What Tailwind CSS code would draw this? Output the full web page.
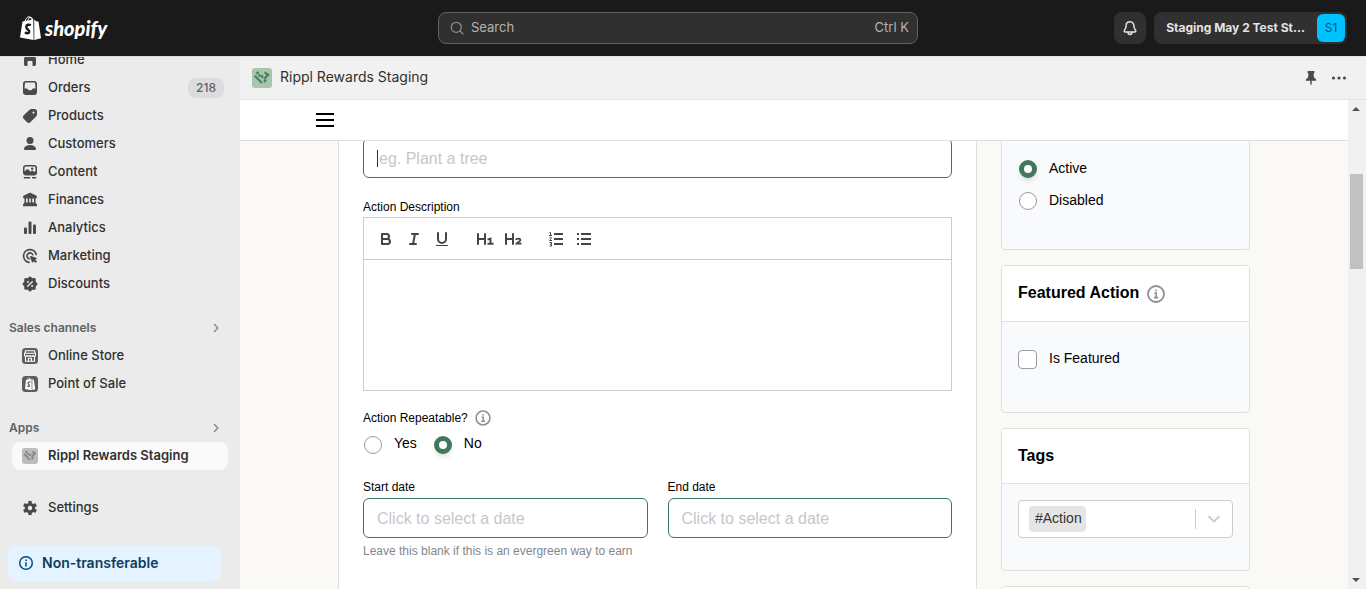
<!DOCTYPE html>
<html lang="en">
<head>
<meta charset="utf-8">
<meta name="viewport" content="width=device-width, initial-scale=1">
<title>Rippl Rewards Staging</title>
<script src="https://cdn.jsdelivr.net/npm/@tailwindcss/browser@4"></script>
</head>
<body class="flex h-screen flex-col overflow-hidden bg-[#1a1a1a] font-['Inter',sans-serif] text-[13px] text-[#303030]">

<header class="grid h-14 shrink-0 grid-cols-[418px_minmax(0,480px)_minmax(0,1fr)] items-center bg-[#1a1a1a] pr-[19px] pl-5">
  <a href="#" aria-label="Shopify home" class="flex items-center gap-1 text-white">
    <svg class="h-6 w-[21px]" viewBox="0 0 21 24" fill="none">
      <path d="M2.500 5.600 13.300 3.400 13.600 24 0 21.400Z" fill="#fff"/>
      <path d="M14.200 3.600 16 5.300 18.500 5.600 21 22.300 14.300 23.900Z" fill="#fff"/>
      <path d="M5 6C5.400 2.800 7.200.7 9 .8c2 .1 2.700 2.200 2.800 4M7.800 5C8 2.500 9.700 1 11 1.300c1 .3 1.600 1.300 1.800 2.700" stroke="#fff" stroke-width="1"/>
      <path d="M10.700 9.300C9.200 8.300 6.500 8.500 6.300 10.900c-.2 2.500 3.200 2.700 2.900 5-.3 1.900-2.600 1.700-4.200.4" stroke="#1a1a1a" stroke-width="2.500"/>
    </svg>
    <span class="font-['Lato',sans-serif] text-[20px] leading-6 font-black italic">shopify</span>
  </a>
  <button type="button" class="flex h-8 items-center gap-1 rounded-lg border border-[#616161] bg-[#303030] px-2 text-[13px] text-[#b5b5b5]">
    <svg class="size-5" viewBox="0 0 20 20" fill="none" stroke="#8a8a8a" stroke-width="1.300" stroke-linecap="round"><circle cx="9.300" cy="9.300" r="5"/><path d="m13 13 3 3"/></svg>
    <span>Search</span>
    <span class="ml-auto">Ctrl K</span>
  </button>
  <div class="flex items-center justify-end gap-2">
    <button type="button" aria-label="Notifications" class="flex size-8 items-center justify-center rounded-lg bg-[#303030]">
      <svg class="size-5" viewBox="0 0 20 20" fill="none" stroke="#e3e3e3" stroke-width="1.500" stroke-linejoin="round" stroke-linecap="round"><path d="M10 3.700c-2.600 0-3.900 2-3.900 4.100 0 2.300-.5 3.100-1.500 4.200-.8.900-.3 2 .8 2h9.200c1.100 0 1.600-1.100.8-2-1-1.100-1.500-1.900-1.500-4.200 0-2.100-1.300-4.100-3.900-4.100Z"/><path d="M8 14.300c0 1.500.8 2.200 2 2.200s2-.7 2-2.200"/></svg>
    </button>
    <button type="button" class="flex h-8 items-center gap-3 rounded-lg bg-[#303030] pr-0.5 pl-3 text-[#e3e3e3]">
      <span class="text-[12px] font-bold">Staging May 2 Test St...</span>
      <span class="flex size-7 items-center justify-center rounded-md bg-[#00c2ff] text-[12px] text-[#00527c]">S1</span>
    </button>
  </div>
</header>

<div class="flex min-h-0 flex-1">
  <aside class="w-60 shrink-0 overflow-hidden border-t border-[#dcdcdc] bg-[#ebebeb]">
    <nav aria-label="Main" class="-mt-[11px] px-3 font-medium">
      <a href="#" class="flex h-7 items-center gap-2 px-2"><svg class="size-5" viewBox="0 0 20 20" fill="#4a4a4a"><path d="M9 3.500a1.500 1.500 0 0 1 2 0l4.500 4c.4.400.5.800.5 1.300v5.400c0 1-.8 1.800-1.800 1.800H12.500v-4c0-.600-.400-1-1-1h-3c-.600 0-1 .400-1 1v4H5.800c-1 0-1.800-.800-1.800-1.800V8.800c0-.5.200-1 .5-1.300Z"/></svg>Home</a>
      <a href="#" class="flex h-7 items-center gap-2 pr-1 pl-2"><svg class="size-5" viewBox="0 0 20 20" fill="#4a4a4a" fill-rule="evenodd"><path d="M6 3h8a3 3 0 0 1 3 3v8a3 3 0 0 1-3 3H6a3 3 0 0 1-3-3V6a3 3 0 0 1 3-3Zm.3 1.500c-.8 0-1.300.5-1.400 1.200L4.500 10.500h2.100c.5 0 .9.200 1.100.6l.4.700c.2.300.4.400.7.400h2.400c.3 0 .5-.1.700-.4l.4-.7c.2-.4.6-.6 1.100-.6h2.100l-.4-4.800c-.1-.7-.6-1.200-1.400-1.200Z"/></svg>Orders<span class="ml-auto flex h-5 w-9 items-center justify-center rounded-lg bg-[#dcdcdc] text-[12px] text-[#616161]">218</span></a>
      <a href="#" class="flex h-7 items-center gap-2 px-2"><svg class="size-5" viewBox="0 0 20 20" fill="#4a4a4a" fill-rule="evenodd"><path d="M11.300 3h3.400c1.300 0 2.300 1 2.300 2.300v3.400c0 .600-.2 1.200-.7 1.600l-5.700 5.800a2.600 2.600 0 0 1-3.700 0L3.800 13a2.600 2.600 0 0 1 0-3.700l5.800-5.600c.5-.5 1.100-.7 1.700-.7Zm2.200 4.700a1.100 1.100 0 1 0 0-2.200 1.100 1.100 0 0 0 0 2.200Z"/></svg>Products</a>
      <a href="#" class="flex h-7 items-center gap-2 px-2"><svg class="size-5" viewBox="0 0 20 20" fill="#4a4a4a"><circle cx="10" cy="6.500" r="3.500"/><path d="M4 14.500c.5-2.300 3-3.500 6-3.500s5.500 1.200 6 3.500c.2 1-.5 1.500-1.300 1.500H5.300c-.8 0-1.500-.5-1.300-1.500Z"/></svg>Customers</a>
      <a href="#" class="flex h-7 items-center gap-2 px-2"><svg class="size-5" viewBox="0 0 20 20" fill="#4a4a4a"><path fill-rule="evenodd" d="M6 3h8a3 3 0 0 1 3 3v4.500a3 3 0 0 1-3 3H6a3 3 0 0 1-3-3V6a3 3 0 0 1 3-3Zm.2 1.500C5.100 4.500 4.500 5.200 4.500 6v3.600l2-2c.6-.6 1.300-.6 1.900 0l2.100 2.200.7-.7c.6-.6 1.400-.6 2 0l1 1 1.300-1V6c0-.9-.7-1.500-1.500-1.500Z"/><circle cx="12.200" cy="6.700" r="1.200"/><path d="M3.800 15h6.400v1.500H3.800zM12 15h4.200v1.500H12z"/></svg>Content</a>
      <a href="#" class="flex h-7 items-center gap-2 px-2"><svg class="size-5" viewBox="0 0 20 20" fill="#4a4a4a"><path d="M9.100 3c.6-.3 1.200-.3 1.800 0l5.300 2.600c1.300.7.9 2.900-.6 2.900H4.400c-1.500 0-1.900-2.200-.6-2.900ZM4.500 8H6v5H4.500zM7.700 8h1.500v5H7.700zM10.800 8h1.500v5h-1.500zM14 8h1.500v5H14zM4.500 12.500h11l1.500 2v1.700H3v-1.700Z"/></svg>Finances</a>
      <a href="#" class="flex h-7 items-center gap-2 px-2"><svg class="size-5" viewBox="0 0 20 20" fill="#4a4a4a"><rect x="4" y="9.500" width="3" height="6.500" rx="1"/><rect x="8.500" y="3.500" width="3" height="12.500" rx="1"/><rect x="13" y="6.500" width="3" height="9.500" rx="1"/></svg>Analytics</a>
      <a href="#" class="flex h-7 items-center gap-2 px-2"><svg class="size-5" viewBox="0 0 20 20" fill="none" stroke="#4a4a4a" stroke-width="1.700" stroke-linecap="round"><path d="M16.200 8.500A6.400 6.400 0 1 0 9 16.300"/><path d="M12.700 8.600a3 3 0 1 0-3.600 4.200"/><path d="m10.600 10.600 2 5.300 1-1.900 2 2 .5-.5-2-2 1.900-1Z" fill="#4a4a4a" stroke-linejoin="round" stroke-width="1.400"/></svg>Marketing</a>
      <a href="#" class="flex h-7 items-center gap-2 px-2"><svg class="size-5" viewBox="0 0 20 20"><g fill="#4a4a4a" stroke="#4a4a4a" stroke-width="2.400" stroke-linejoin="round"><path d="m10 3.700 1.900 1.700 2.600-.1.100 2.700L16.300 10l-1.700 1.900-.1 2.700-2.600-.1L10 16.300l-1.900-1.800-2.600.1-.1-2.700L3.700 10l1.700-2 .1-2.700 2.600.1Z"/></g><path d="m7.700 12.300 4.600-4.600" stroke="#ebebeb" stroke-width="1.400" stroke-linecap="round"/><circle cx="7.900" cy="7.900" r="1" fill="#ebebeb"/><circle cx="12.100" cy="12.100" r="1" fill="#ebebeb"/></svg>Discounts</a>
    </nav>

    <section class="mt-4">
      <a href="#" class="flex h-7 items-center justify-between pr-3.5 pl-[9px] text-[12px] font-semibold text-[#616161]">Sales channels<svg class="size-5" viewBox="0 0 20 20" fill="none" stroke="#8a8a8a" stroke-width="1.500" stroke-linecap="round" stroke-linejoin="round"><path d="m8.500 6.500 3.300 3.500-3.300 3.500"/></svg></a>
      <div class="px-3 font-medium">
        <a href="#" class="flex h-7 items-center gap-2 px-2"><svg class="size-5" viewBox="0 0 20 20" fill="none"><rect x="2" y="2" width="16" height="16" rx="3.500" fill="#5c5f62"/><path d="M5.500 4.700h9l1 3.300v1c0 .8-.7 1.300-1.400 1.300S12.800 9.800 12.800 9c0 .8-.7 1.300-1.400 1.300S10 9.800 10 9c0 .8-.7 1.300-1.400 1.300S7.200 9.800 7.200 9c0 .8-.7 1.300-1.400 1.300S4.500 9.800 4.500 9V8ZM4.800 7.300h10.400M5.500 10.500v4.800h9v-4.800M8.500 15v-2.700h3V15" stroke="#fff" stroke-width="1.100"/></svg>Online Store</a>
        <a href="#" class="flex h-7 items-center gap-2 px-2"><svg class="size-5" viewBox="0 0 20 20" fill="none"><rect x="2" y="2" width="16" height="16" rx="3.500" fill="#5c5f62"/><path d="m6 6 5.500-1.300.2 11.500L5 15Z" fill="#fff"/><path d="m12.300 5 1.600 1.200 1.300 9-2.900.9Z" fill="#fff"/><path d="M7.300 5.800C7.700 4.300 9 3.500 10.300 4.500" stroke="#fff" stroke-width=".8"/><path d="M10.400 8.300c-.9-.6-2.200-.4-2.300.8-.1 1.300 1.600 1.400 1.400 2.600-.1 1-1.400.9-2.200.2" stroke="#5c5f62" stroke-width="1.300"/></svg>Point of Sale</a>
      </div>
    </section>

    <section class="mt-4">
      <a href="#" class="flex h-7 items-center justify-between pr-3.5 pl-[9px] text-[12px] font-semibold text-[#616161]">Apps<svg class="size-5" viewBox="0 0 20 20" fill="none" stroke="#8a8a8a" stroke-width="1.500" stroke-linecap="round" stroke-linejoin="round"><path d="m8.500 6.500 3.300 3.500-3.300 3.500"/></svg></a>
      <div class="px-3">
        <a href="#" aria-current="page" class="flex h-7 items-center gap-2 rounded-lg bg-[#fafafa] px-2 font-semibold"><svg class="size-5" viewBox="-2.500 -2.500 25 25"><rect width="20" height="20" rx="3" fill="#bdbdbd"/><path d="m2.700 7.700 7.300 7.300M4.300 5.900l2.300-2M6.300 8.300l2-1.800M12 14l2.200-2.200M12 11l5-5M12.800 4.200l3.600 3.600" fill="none" stroke="#858585" stroke-width="2.200"/><path d="m10 6.700 1.900 1.900L10 10.500 8.100 8.600Z" fill="#858585"/></svg>Rippl Rewards Staging</a>
      </div>
    </section>

    <div class="mt-6 px-3 font-medium">
      <a href="#" class="flex h-7 items-center gap-2 px-2"><svg class="size-5" viewBox="0 0 20 20" fill="none" stroke="#4a4a4a"><circle cx="10" cy="10" r="3.700" stroke-width="3"/><path d="M10 3v3M10 14v3M3.900 6.500l2.600 1.500M13.500 12l2.600 1.500M3.900 13.500 6.500 12M13.500 8l2.600-1.500" stroke-width="3.400"/></svg>Settings</a>
    </div>
    <div class="mt-[23px] mr-[19px] ml-2 flex h-9 items-center gap-1.5 rounded-lg bg-[#e5f2ff] px-2 text-[14px] leading-5 font-semibold text-[#0b3d5c]">
      <svg class="size-5" viewBox="0 0 20 20" fill="none" stroke="#00527c" stroke-width="1.500" stroke-linecap="round"><circle cx="10" cy="10" r="6.300"/><path d="M10 9.800v3.200"/><circle cx="10" cy="7.200" r=".4" fill="#00527c" stroke-width="1"/></svg>
      Non-transferable
    </div>
  </aside>

  <div class="flex min-w-0 flex-1 flex-col">
    <div class="flex h-11 shrink-0 items-center gap-2 border-t border-b border-t-[#e3e3e3] border-b-[#e3e3e3] bg-[#f1f1f1] pr-[13px] pl-3">
      <svg class="size-5" viewBox="0 0 20 20"><rect width="20" height="20" rx="3" fill="#a9c5ae"/><path d="m2.700 7.700 7.300 7.300M4.300 5.900l2.300-2M6.300 8.300l2-1.800M12 14l2.200-2.200M12 11l5-5M12.800 4.200l3.600 3.600" fill="none" stroke="#43835f" stroke-width="2.200"/><path d="m10 6.700 1.900 1.900L10 10.500 8.100 8.600Z" fill="#43835f"/></svg>
      <h1 class="pb-0.5 text-[14px] leading-5">Rippl Rewards Staging</h1>
      <button type="button" aria-label="Pin app" class="ml-auto"><svg class="size-5" viewBox="0 0 20 20" fill="#4a4a4a"><path d="M6.600 3h6.800v2l-.8.800.3 3.700c1.500.8 2.300 1.800 2.300 3.200H10.700V16l-.7 1.200-.7-1.200v-3.300H4.800c0-1.400.8-2.400 2.300-3.200l.3-3.700-.8-.8Z"/></svg></button>
      <button type="button" aria-label="More actions" class="mr-1"><svg class="size-5" viewBox="0 0 20 20" fill="#4a4a4a"><circle cx="4.500" cy="10" r="1.600"/><circle cx="10" cy="10" r="1.600"/><circle cx="15.500" cy="10" r="1.600"/></svg></button>
    </div>

    <div class="flex min-h-0 flex-1 font-['Liberation_Sans',Arial,sans-serif] text-black">
      <div class="flex min-w-0 flex-1 flex-col bg-[#faf9f5]">
        <div class="flex h-[41px] shrink-0 items-center border-b border-[#dfdfe1] bg-white px-[76px]">
          <button type="button" aria-label="Open menu" class="flex w-[18px] flex-col gap-1"><span class="h-0.5 bg-black"></span><span class="h-0.5 bg-black"></span><span class="h-0.5 bg-black"></span></button>
        </div>

        <main class="min-h-0 flex-1 overflow-hidden px-[98px]">
          <div class="-mt-[3px] grid grid-cols-[minmax(0,1fr)_249px] items-start gap-6">
            <form class="h-[460px] border-x border-[#dfdfe1] bg-white px-6">
              <div class="relative">
                <input type="text" aria-label="Action title" placeholder="eg. Plant a tree" class="block h-10 w-full rounded-md border border-[#41775a] pt-0.5 pr-3 pl-[15px] text-[16px] outline-none placeholder:text-[#c6c7ca]">
                <span class="absolute top-3 left-3.5 h-[17px] w-px bg-[#303040]"></span>
              </div>

              <label for="description" class="mt-[19px] block h-5 text-[12px] leading-5">Action Description</label>
              <div class="border border-[#ccc]">
                <div role="toolbar" aria-label="Formatting" class="flex h-[42px] items-center border-b border-[#ccc] px-2">
                  <button type="button" aria-label="Bold" class="flex w-7 justify-center"><svg class="size-[18px]" viewBox="0 0 18 18" fill="none" stroke="#444" stroke-width="2" stroke-linejoin="round"><path d="M5 4h4.500a2.500 2.500 0 0 1 0 5H5ZM5 9h5.500a2.500 2.500 0 0 1 0 5H5Z"/></svg></button>
                  <button type="button" aria-label="Italic" class="flex w-7 justify-center"><svg class="size-[18px]" viewBox="0 0 18 18" fill="none" stroke="#444" stroke-width="2" stroke-linecap="round"><path d="M7 4h6M5 14h6M8 14l2-10"/></svg></button>
                  <button type="button" aria-label="Underline" class="flex w-7 justify-center"><svg class="size-[18px]" viewBox="0 0 18 18" fill="none" stroke="#444" stroke-width="2"><path stroke-linecap="round" d="M5 3v6a4 4 0 0 0 8 0V3"/><path stroke-width="1" d="M3 15.500h12"/></svg></button>
                  <button type="button" aria-label="Heading 1" class="ml-[15px] flex w-7 justify-center"><svg class="size-[18px]" viewBox="0 0 18 18" fill="none" stroke="#444" stroke-width="2" stroke-linecap="round"><path d="M2 4v10M9 4v10M2 9h7"/><path stroke-width="1.900" stroke-linecap="butt" d="M11.500 9.600 14.500 8.500V14M11.500 13.700h6"/></svg></button>
                  <button type="button" aria-label="Heading 2" class="flex w-7 justify-center"><svg class="size-[18px]" viewBox="0 0 18 18" fill="none" stroke="#444" stroke-width="2" stroke-linecap="round"><path d="M2 4v10M9 4v10M2 9h7"/><path stroke-width="1.900" stroke-linecap="butt" d="M12 10c.3-1.900 4.400-1.800 4.300.2-.1 1.500-2.900 1.900-3.700 3.400h4.900"/></svg></button>
                  <button type="button" aria-label="Numbered list" class="ml-[15px] flex w-7 justify-center"><svg class="size-[18px]" viewBox="0 0 18 18" fill="none" stroke="#444" stroke-width="2"><path d="M7 4h9M7 9h9M7 14h9"/><path stroke-width="1" d="M2.500 2.500h1v3M2 5.500h3M2.500 7.700c.7-.4 2-.4 2 .5 0 .7-1.500 1-2 2.300h2.500M2.500 12.500h2v1.700H3.200M4.500 14.200v1.800h-2"/></svg></button>
                  <button type="button" aria-label="Bulleted list" class="flex w-7 justify-center"><svg class="size-[18px]" viewBox="0 0 18 18" fill="none" stroke="#444" stroke-width="2"><path d="M6 4h10M6 9h10M6 14h10"/><path d="M2 4h2M2 9h2M2 14h2"/></svg></button>
                </div>
                <textarea id="description" class="block h-[130px] w-full resize-none px-4 py-3 text-[13px] outline-none"></textarea>
              </div>

              <fieldset class="mt-[17px]">
                <legend class="flex h-5 items-center gap-[7px] text-[12px] leading-5">Action Repeatable?
                  <svg class="size-4" viewBox="0 0 18 18" fill="none" stroke="#8e8e96"><circle cx="9" cy="9" r="7.800" stroke-width="1.700"/><path stroke-width="1.600" d="M7.300 8H9.200v4.500M7 12.600h4.200"/><circle cx="9" cy="5.500" r=".8" fill="#8e8e96" stroke-width=".4"/></svg>
                </legend>
                <div class="flex h-[34px] items-center text-[14px]">
                  <input type="radio" id="yes" name="repeat" class="ml-px size-[18px] appearance-none rounded-full border border-[#9c9da4] bg-white checked:border-[5px] checked:border-[#41775a] checked:shadow-md">
                  <label for="yes" class="ml-3 pb-1">Yes</label>
                  <input type="radio" id="no" name="repeat" checked class="ml-[17px] size-[18px] appearance-none rounded-full border border-[#9c9da4] bg-white checked:border-[5px] checked:border-[#41775a] checked:shadow-md">
                  <label for="no" class="ml-3 pb-1">No</label>
                </div>
              </fieldset>

              <div class="mt-[15px] grid grid-cols-2 gap-5">
                <div>
                  <label for="start" class="block h-[21px] text-[12px] leading-5">Start date</label>
                  <input type="text" id="start" placeholder="Click to select a date" class="block h-10 w-full rounded-md border border-[#41775a] px-[13px] pt-0.5 text-[16px] outline-none placeholder:text-[#c6c7ca]">
                  <p class="mt-[3px] text-[12px] leading-5 whitespace-nowrap text-[#85868c]">Leave this blank if this is an evergreen way to earn</p>
                </div>
                <div>
                  <label for="end" class="block h-[21px] text-[12px] leading-5">End date</label>
                  <input type="text" id="end" placeholder="Click to select a date" class="block h-10 w-full rounded-md border border-[#41775a] px-[13px] pt-0.5 text-[16px] outline-none placeholder:text-[#c6c7ca]">
                </div>
              </div>
            </form>

            <div class="flex flex-col gap-[15px] text-[14px]">
              <section class="h-28 rounded-b border border-t-0 border-[#dfdfe1] bg-[#f9fafc] px-4 pt-[15px]">
                <div class="flex h-8 items-center gap-3">
                  <input type="radio" id="active" name="status" checked class="ml-px size-[18px] appearance-none rounded-full border border-[#9c9da4] bg-white checked:border-[5px] checked:border-[#41775a] checked:shadow-md">
                  <label for="active" class="pb-0.5">Active</label>
                </div>
                <div class="flex h-8 items-center gap-3">
                  <input type="radio" id="disabled" name="status" class="ml-px size-[18px] appearance-none rounded-full border border-[#9c9da4] bg-white checked:border-[5px] checked:border-[#41775a] checked:shadow-md">
                  <label for="disabled" class="pb-0.5">Disabled</label>
                </div>
              </section>

              <section class="overflow-hidden rounded border border-[#dfdfe1] bg-[#f9fafc]">
                <div class="flex h-14 items-center gap-2 border-b border-[#dfdfe1] bg-white px-4">
                  <h2 class="pb-0.5 text-[16px] font-bold">Featured Action</h2>
                  <svg class="size-[18px]" viewBox="0 0 18 18" fill="none" stroke="#8e8e96"><circle cx="9" cy="9" r="8" stroke-width="1.800"/><path stroke-width="1.600" d="M7.300 8H9.200v4.500M7 12.600h4.200"/><circle cx="9" cy="5.500" r=".8" fill="#8e8e96" stroke-width=".4"/></svg>
                </div>
                <div class="flex h-[90px] items-start gap-3 px-4 pt-7">
                  <input type="checkbox" id="featured" class="size-[19px] appearance-none rounded border border-[#9c9da4] bg-white">
                  <label for="featured" class="leading-4">Is Featured</label>
                </div>
              </section>

              <section class="overflow-hidden rounded border border-[#dfdfe1] bg-[#f9fafc]">
                <div class="flex h-[55px] items-center border-b border-[#dfdfe1] bg-white px-4">
                  <h2 class="text-[16px] font-bold"><label for="tags">Tags</label></h2>
                </div>
                <div class="h-[86px] px-4 pt-4">
                  <div class="flex h-[38px] items-center rounded border border-[#ccc] bg-white pl-2.5">
                    <span class="flex h-[26px] items-center rounded-sm bg-[#e5e5e5] pr-1 pb-0.5 pl-1.5 text-[#333]">#Action</span>
                    <input type="text" id="tags" role="combobox" aria-expanded="false" class="min-w-0 flex-1 px-1 outline-none">
                    <button type="button" aria-label="Show tags" class="flex h-5 w-[37px] items-center justify-center border-l border-[#ccc]"><svg class="size-5" viewBox="0 0 20 20" fill="none" stroke="#ccc" stroke-width="2" stroke-linecap="round" stroke-linejoin="round"><path d="m5.200 7.800 4.800 4.700 4.800-4.700"/></svg></button>
                  </div>
                </div>
              </section>

              <section class="h-14 rounded-t border border-b-0 border-[#dfdfe1] bg-white"></section>
            </div>
          </div>
        </main>
      </div>

      <div aria-hidden="true" class="flex w-[18px] shrink-0 flex-col items-center justify-between bg-[#f1f1f1] pt-[7px] pr-0.5 pb-[7px]">
        <svg class="h-1 w-2 shrink-0" viewBox="0 0 8 4" fill="#505050"><path d="M0 4 4 0 8 4Z"/></svg>
        <div class="flex-1 pt-[63px]"><div class="h-[95px] w-[13px] bg-[#c1c1c1]"></div></div>
        <svg class="h-1 w-2 shrink-0" viewBox="0 0 8 4" fill="#505050"><path d="M0 0h8L4 4Z"/></svg>
      </div>
    </div>
  </div>
</div>
</body>
</html>
